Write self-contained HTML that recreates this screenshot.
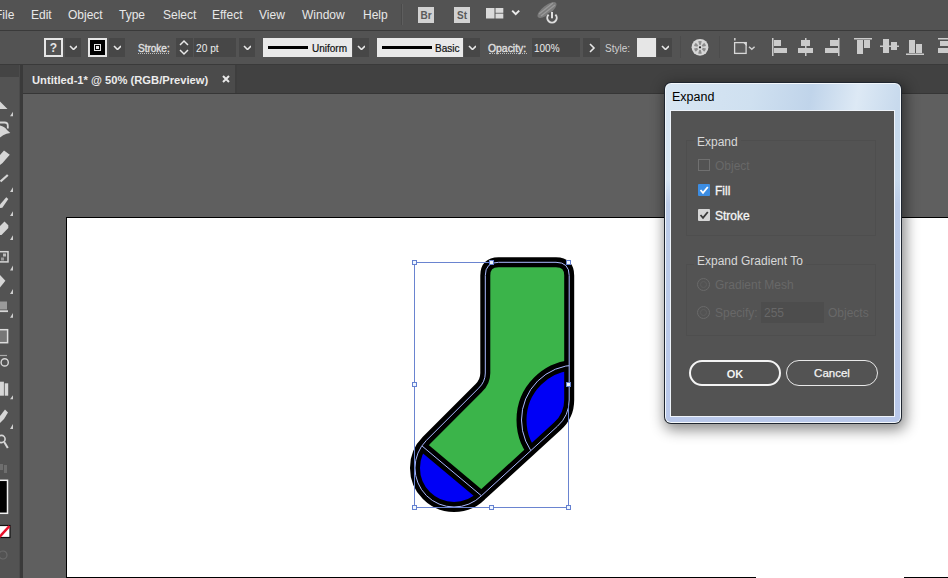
<!DOCTYPE html>
<html><head><meta charset="utf-8">
<style>
*{margin:0;padding:0;box-sizing:border-box}
html,body{width:948px;height:578px;overflow:hidden;background:#5f5f5f;font-family:"Liberation Sans",sans-serif}
.a{position:absolute}
#menubar{left:0;top:0;width:948px;height:30px;background:#535353}
#menuline{left:0;top:30px;width:948px;height:1px;background:#3a3a3a}
#ctrl{left:0;top:31px;width:948px;height:33px;background:#535353}
#ctrlline{left:0;top:64px;width:948px;height:1px;background:#3a3a3a}
#tabbar{left:0;top:65px;width:948px;height:28px;background:#414141}
#tab{left:23px;top:65px;width:212px;height:28px;background:#4b4b4b}
#tabedge{left:235px;top:65px;width:2px;height:28px;background:#3e3e3e}
#tabline{left:23px;top:93px;width:925px;height:1px;background:#363636}
#tools{left:0;top:65px;width:19px;height:513px;background:#535353}
#toolshead{left:0;top:65px;width:19px;height:12px;background:#444444}
#toolsgap{left:19px;top:65px;width:1px;height:513px;background:#4b4b4b}
#toolsline{left:20px;top:65px;width:3px;height:513px;background:#3a3a3a}
#canvas{left:23px;top:94px;width:925px;height:484px;background:#5f5f5f}
#artboard{left:66px;top:217px;width:882px;height:361px;background:#fff;border-left:1px solid #000;border-top:1px solid #000}
#abbottom{left:66px;top:577px;width:690px;height:1px;background:#000}
#abbottom2{left:904px;top:577px;width:44px;height:1px;background:#000}
.mi{position:absolute;top:8px;font-size:12px;color:#e8e8e8;white-space:nowrap;line-height:14px}
.lbl{position:absolute;font-size:11px;color:#e0e0e0;white-space:nowrap;line-height:13px}
.dd{position:absolute;top:38px;width:16px;height:19px;background:#474747}
.chev{position:absolute;width:8px;height:5px}
.sep{position:absolute;top:36px;width:1px;height:22px;background:#474747}
.tb{position:absolute;background:#d8d8d8}
.tind{position:absolute;width:0;height:0;border-left:4px solid transparent;border-bottom:4px solid #cfcfcf}
</style></head>
<body>
<div class="a" id="menubar"></div>
<div class="a" id="menuline"></div>
<div class="a" id="ctrl"></div>
<div class="a" id="ctrlline"></div>
<div class="a" id="tabbar"></div>
<div class="a" id="tab"></div>
<div class="a" id="tabedge"></div>
<div class="a" id="canvas"></div>
<div class="a" id="tabline"></div>
<div class="a" id="tools"></div>
<div class="a" id="toolshead"></div>
<div class="a" id="toolsgap"></div>
<div class="a" id="toolsline"></div>
<div class="a" id="artboard"></div>
<div class="a" id="abbottom"></div><div class="a" id="abbottom2"></div>

<!-- menu -->
<div class="mi" style="left:-5px">File</div>
<div class="mi" style="left:31px">Edit</div>
<div class="mi" style="left:68px">Object</div>
<div class="mi" style="left:119px">Type</div>
<div class="mi" style="left:163px">Select</div>
<div class="mi" style="left:212px">Effect</div>
<div class="mi" style="left:259px">View</div>
<div class="mi" style="left:302px">Window</div>
<div class="mi" style="left:363px">Help</div>
<div class="a" style="left:402px;top:4px;width:1px;height:21px;background:#5e5e5e"></div><div class="a" style="left:401px;top:4px;width:1px;height:21px;background:#4a4a4a"></div>
<div class="a" style="left:418px;top:7px;width:16px;height:16px;background:#d2d2d2;color:#5a5a5a;font-size:10px;font-weight:bold;text-align:center;line-height:18px">Br</div>
<div class="a" style="left:454px;top:7px;width:16px;height:16px;background:#d2d2d2;color:#5a5a5a;font-size:10px;font-weight:bold;text-align:center;line-height:18px">St</div>
<svg class="a" style="left:484px;top:6px" width="40" height="18" viewBox="0 0 40 18">
  <rect x="2" y="2" width="8.5" height="10.5" fill="#dadada"/>
  <rect x="11.5" y="2" width="7.8" height="4.8" fill="#dadada"/>
  <rect x="11.5" y="7.6" width="7.8" height="4.9" fill="#dadada"/>
  <path d="M28.2 4.6 L31.7 8.1 L35.2 4.6" stroke="#ececec" stroke-width="2" fill="none"/>
</svg>
<svg class="a" style="left:534px;top:0px" width="26" height="26" viewBox="534 0 26 26">
  <ellipse cx="547" cy="10" rx="11.5" ry="4.6" transform="rotate(-38 547 10)" fill="#7c7c7c"/>
  <path d="M539 14 L553 3 M541 16 L555 5" stroke="#9a9a9a" stroke-width="1.2"/>
  <circle cx="552" cy="18.3" r="6.3" fill="#535353"/>
  <path d="M548.6 14.6 A4.7 4.7 0 1 0 555.4 14.6" stroke="#dedede" stroke-width="2" fill="none"/>
  <rect x="551" y="12" width="2" height="6.3" fill="#dedede"/>
</svg>

<!-- control bar -->
<div class="a" style="left:44px;top:38px;width:19px;height:19px;border:2px solid #e6e6e6;color:#e6e6e6;font-size:12px;font-weight:bold;text-align:center;line-height:17px">?</div>
<div class="dd" style="left:65px"></div>
<svg class="chev a" style="left:69px;top:45px" width="9" height="6"><path d="M1 1 L4.5 4.5 L8 1" stroke="#e8e8e8" stroke-width="1.6" fill="none"/></svg>
<div class="a" style="left:88px;top:38px;width:19px;height:19px;background:#000;border:2px solid #e6e6e6"></div>
<div class="a" style="left:94px;top:44px;width:7px;height:7px;border:1.5px solid #e6e6e6;background:#000"></div>
<div class="a" style="left:96px;top:46px;width:3px;height:3px;background:#e6e6e6"></div>
<div class="dd" style="left:109px"></div>
<svg class="chev a" style="left:113px;top:45px" width="9" height="6"><path d="M1 1 L4.5 4.5 L8 1" stroke="#e8e8e8" stroke-width="1.6" fill="none"/></svg>
<div class="lbl" style="left:138px;top:43px;font-size:10px;-webkit-text-stroke:0.35px #e0e0e0;line-height:12px">Stroke:</div><div class="a" style="left:138px;top:53px;width:31px;height:1px;border-top:1px dotted #bdbdbd"></div>
<div class="a" style="left:176px;top:38px;width:17px;height:19px;background:#474747"></div>
<svg class="a" style="left:178px;top:39px" width="12" height="17"><path d="M2 6 L6 2 L10 6 M2 11 L6 15 L10 11" stroke="#e8e8e8" stroke-width="1.5" fill="none"/></svg>
<div class="a" style="left:194px;top:38px;width:42px;height:19px;background:#474747"></div>
<div class="lbl" style="left:196px;top:43px;font-size:10.2px;line-height:12px;color:#ececec">20 pt</div>
<div class="dd" style="left:239px"></div>
<svg class="chev a" style="left:243px;top:45px" width="9" height="6"><path d="M1 1 L4.5 4.5 L8 1" stroke="#e8e8e8" stroke-width="1.6" fill="none"/></svg>
<div class="a" style="left:263px;top:38px;width:89px;height:19px;background:#e9e9e9"></div>
<div class="a" style="left:268px;top:46px;width:40px;height:3.4px;background:#000"></div>
<div class="lbl" style="left:312px;top:43px;color:#111;font-size:10px;line-height:12px;-webkit-text-stroke:0.2px #111">Uniform</div>
<div class="dd" style="left:353px"></div>
<svg class="chev a" style="left:357px;top:45px" width="9" height="6"><path d="M1 1 L4.5 4.5 L8 1" stroke="#e8e8e8" stroke-width="1.6" fill="none"/></svg>
<div class="a" style="left:377px;top:38px;width:86px;height:19px;background:#e9e9e9"></div>
<div class="a" style="left:382px;top:46px;width:50px;height:3.4px;background:#000"></div>
<div class="lbl" style="left:435px;top:43px;color:#111;font-size:10px;line-height:12px;-webkit-text-stroke:0.2px #111">Basic</div>
<div class="dd" style="left:464px"></div>
<svg class="chev a" style="left:468px;top:45px" width="9" height="6"><path d="M1 1 L4.5 4.5 L8 1" stroke="#e8e8e8" stroke-width="1.6" fill="none"/></svg>
<div class="lbl" style="left:488px;top:43px;font-size:10.4px;-webkit-text-stroke:0.35px #e0e0e0;line-height:12px">Opacity:</div><div class="a" style="left:489px;top:53px;width:38px;height:1px;border-top:1px dotted #bdbdbd"></div>
<div class="a" style="left:532px;top:38px;width:48px;height:19px;background:#474747"></div>
<div class="lbl" style="left:534px;top:43px;font-size:10px;line-height:12px;color:#ececec">100%</div>
<div class="a" style="left:583px;top:38px;width:17px;height:19px;background:#474747"></div>
<svg class="a" style="left:588px;top:43px" width="8" height="10"><path d="M2 1 L6 5 L2 9" stroke="#e8e8e8" stroke-width="1.6" fill="none"/></svg>
<div class="lbl" style="left:605px;top:43px;font-size:10px;line-height:12px;color:#d0d0d0">Style:</div>
<div class="a" style="left:637px;top:38px;width:19px;height:19px;background:#e6e6e6"></div>
<div class="dd" style="left:657px;width:15px"></div>
<svg class="chev a" style="left:661px;top:45px" width="9" height="6"><path d="M1 1 L4.5 4.5 L8 1" stroke="#e8e8e8" stroke-width="1.6" fill="none"/></svg>
<div class="sep" style="left:680px;background:#4c4c4c"></div>
<svg class="a" style="left:690px;top:38px" width="20" height="19" viewBox="0 0 20 19">
  <circle cx="10" cy="9.3" r="8.4" fill="#d6d6d6"/>
  <g fill="#8c8c8c">
   <path d="M10 9.3 L8.2 3.2 A6.3 6.3 0 0 1 11.8 3.2 Z"/>
   <path d="M10 9.3 L14.2 4.8 A6.3 6.3 0 0 1 16 8 Z"/>
   <path d="M10 9.3 L16 10.6 A6.3 6.3 0 0 1 14.2 13.8 Z"/>
   <path d="M10 9.3 L11.8 15.4 A6.3 6.3 0 0 1 8.2 15.4 Z"/>
   <path d="M10 9.3 L5.8 13.8 A6.3 6.3 0 0 1 4 10.6 Z"/>
   <path d="M10 9.3 L4 8 A6.3 6.3 0 0 1 5.8 4.8 Z"/>
  </g>
  <circle cx="10" cy="9.3" r="2.6" fill="#d6d6d6"/>
  <circle cx="10" cy="9.3" r="1.1" fill="#222"/>
</svg>
<div class="sep" style="left:719px;background:#4c4c4c"></div>
<svg class="a" style="left:728px;top:36px" width="30" height="22" viewBox="0 0 30 22">
  <rect x="6.6" y="6.6" width="11.5" height="10.8" fill="#5c5c5c" stroke="#d8d8d8" stroke-width="1.3"/>
  <path d="M14.5 6 H18.7 V10.2 Z" fill="#d8d8d8"/>
  <rect x="6" y="2" width="1.6" height="2.5" fill="#c8c8c8"/>
  <path d="M21 10.8 L23.8 13.3 L26.6 10.8" stroke="#d0d0d0" stroke-width="1.5" fill="none"/>
</svg>
<!-- align icons -->
<svg class="a" style="left:770px;top:36px" width="178" height="22" viewBox="770 36 178 22">
  <g fill="#cbcbcb">
   <rect x="772" y="38" width="1.5" height="18"/><rect x="774" y="40" width="7" height="6"/><rect x="774" y="48" width="13" height="5"/>
   <rect x="805" y="38" width="1.5" height="18"/><rect x="801" y="40" width="9" height="6"/><rect x="798" y="48" width="15" height="5"/>
   <rect x="838" y="38" width="1.5" height="18"/><rect x="830" y="40" width="8" height="6"/><rect x="825" y="48" width="13" height="5"/>
   <rect x="854" y="38" width="18" height="1.5"/><rect x="857" y="40" width="6" height="14"/><rect x="864" y="40" width="6" height="8"/>
   <rect x="880" y="45.5" width="19" height="1.5"/><rect x="883" y="39" width="6" height="14"/><rect x="891" y="42" width="6" height="8"/>
   <rect x="906" y="53.5" width="18" height="1.5"/><rect x="909" y="40" width="6" height="13"/><rect x="916" y="44" width="6" height="9"/>
   <rect x="938" y="38" width="10" height="1.5"/><rect x="940" y="41" width="8" height="5"/><rect x="938" y="48" width="10" height="5"/>
  </g>
</svg>

<!-- tab -->
<div class="a" style="left:32px;top:73px;font-size:11.2px;font-weight:bold;color:#ececec;white-space:nowrap;line-height:14px">Untitled-1* @ 50% (RGB/Preview)</div>
<svg class="a" style="left:222px;top:75px" width="8" height="8"><path d="M1 1 L7 7 M7 1 L1 7" stroke="#e8e8e8" stroke-width="2"/></svg>

<!-- left tools -->
<svg class="a" style="left:0;top:94px" width="19" height="484" viewBox="0 94 19 484">
 <g fill="#d6d6d6">
  <path d="M0 101.5 L7.5 109 L0 109 Z"/>
  <path d="M0 122.5 H4.5 Q7.8 122.5 7.8 125.8 V128.5" fill="none" stroke="#d6d6d6" stroke-width="1.8"/>
  <path d="M0 125.5 Q5 126.5 7 130 L10.3 133 L6.5 133.8 Q3 135 0 137.5 Z"/>
  <path d="M0 155 L4 150.5 L9.8 154.8 L6 159 Q3 163 0 165 Z"/>
  <path d="M0.5 181.5 L7.8 175" fill="none" stroke="#d6d6d6" stroke-width="2.2"/>
  <path d="M0 204.5 L6.3 197.2 L8.3 199 L2.3 207.8 L0 208 Z"/>
  <path d="M0 226 L4.5 221.5 L8.3 225.3 L8.3 228 L1.5 235 L0 235 Z"/>
  <rect x="-1" y="251.7" width="9" height="10.2" fill="none" stroke="#d6d6d6" stroke-width="1.5"/>
  <rect x="3" y="253.5" width="3" height="3" fill="#bbb"/>
  <rect x="1" y="257.5" width="3" height="3" fill="#999"/>
  <path d="M0 275 L5.4 280.8 L0 287.5 Z"/>
  <rect x="0" y="301.5" width="7" height="8" fill="#9a9a9a"/>
  <rect x="0" y="310.3" width="8" height="1.8"/>
  <rect x="-1" y="329.7" width="8.6" height="13" fill="#777" stroke="#dcdcdc" stroke-width="1.5"/>
  <path d="M0 355.5 H7" stroke="#aaa" stroke-width="1.2"/>
  <circle cx="4.7" cy="362.4" r="3.6" fill="none" stroke="#d6d6d6" stroke-width="1.4"/>
  <rect x="0" y="381.7" width="3.9" height="14"/>
  <rect x="4.7" y="383.3" width="3.5" height="12.4"/>
  <path d="M0 416 L5 409.5 L8 412.5 L4 419 L0 423 Z"/>
  <circle cx="1.5" cy="439" r="3.6" fill="none" stroke="#d6d6d6" stroke-width="1.6"/>
  <path d="M4.2 442 L7.8 448" stroke="#d6d6d6" stroke-width="2"/>
 </g>
 <g fill="#d0d0d0">
  <path d="M10 116.3 L13 116.3 L13 111.8 Z"/>
  <path d="M10 192 L13 192 L13 187.3 Z"/>
  <path d="M10 216 L13 216 L13 211.3 Z"/>
  <path d="M10 240 L13 240 L13 235.3 Z"/>
  <path d="M10 270.5 L13 270.5 L13 265.5 Z"/>
  <path d="M10 294 L13 294 L13 289 Z"/>
  <path d="M10 317.8 L13 317.8 L13 313 Z"/>
  <path d="M10 399.2 L13 399.2 L13 395.3 Z"/>
  <path d="M10 429 L13 429 L13 424 Z"/>
 </g>
 <g fill="#6e6e6e"><rect x="0" y="464" width="3" height="6"/><rect x="4" y="465" width="3" height="8"/></g>
 <rect x="-1" y="480.3" width="8.5" height="33" fill="#000" stroke="#f0f0f0" stroke-width="1.5"/>
 <rect x="-1" y="525.5" width="11" height="12" fill="#fff" stroke="#111" stroke-width="1.2"/>
 <path d="M-0.5 537 L9.5 526" stroke="#e8102a" stroke-width="2.6"/>
 <circle cx="3" cy="555" r="4" fill="none" stroke="#6a6a6a" stroke-width="1.2"/>
</svg>

<!-- sock -->
<svg class="a" style="left:0;top:0" width="948" height="578" viewBox="0 0 948 578">
 <defs>
  <path id="sockpath" d="M485.3 275.5 Q485.3 262.3 498.5 262.3 L556 262.3 Q569.2 262.3 569.2 275.5 L569.2 400 Q569.2 415.7 557.4 426.3 L481.6 495.6 A39 39 0 0 1 426.4 440.4 L478.6 388.2 Q485.3 381.85 485.3 373 Z"/>
  <clipPath id="sockclip"><use href="#sockpath"/></clipPath>
 </defs>
 <g clip-path="url(#sockclip)">
  <rect x="400" y="250" width="180" height="270" fill="#3bb44a"/>
  <circle cx="576.5" cy="420" r="55" fill="#0000f6"/>
  <path d="M400.3 427.8 L505.8 516.2 L420 580 L340 480 Z" fill="#0000f6"/>
  <circle cx="576.5" cy="420" r="55" stroke="#000" stroke-width="10" fill="none"/>
  <path d="M400.3 427.8 L505.8 516.2" stroke="#000" stroke-width="10" fill="none"/>
 </g>
 <use href="#sockpath" stroke="#000" stroke-width="10" fill="none"/>
 <g stroke="#a9b8ff" stroke-width="1" fill="none">
  <use href="#sockpath"/>
  <g clip-path="url(#sockclip)">
   <circle cx="576.5" cy="420" r="55"/>
   <path d="M400.3 427.8 L505.8 516.2"/>
  </g>
 </g>
 <path d="M491 262.5 H414.5 V507.5 H568.5 V405" stroke="#6a84d0" stroke-width="1" fill="none"/>
 <g fill="#eef6ff" stroke="#6480d0" stroke-width="1">
  <rect x="412.5" y="260.5" width="4" height="4"/>
  <rect x="489.5" y="260.5" width="4" height="4"/>
  <rect x="566.5" y="260.5" width="4" height="4"/>
  <rect x="412.5" y="382.5" width="4" height="4"/>
  <rect x="566.5" y="382.5" width="4" height="4"/>
  <rect x="412.5" y="505.5" width="4" height="4"/>
  <rect x="489.5" y="505.5" width="4" height="4"/>
  <rect x="566.5" y="505.5" width="4" height="4"/>
 </g>
</svg>

<!-- dialog -->
<div class="a" style="left:664px;top:82px;width:238px;height:342px;border-radius:7px;background:#1f2630;box-shadow:2px 4px 14px 2px rgba(0,0,0,.45)"></div>
<div class="a" style="left:665px;top:83px;width:236px;height:340px;border-radius:6px;background:linear-gradient(100deg,#d8e6f3 0%,#cfe0f0 30%,#c0d4ea 50%,#dde9f5 66%,#c8daed 80%,#c6d9ec 100%);border:1px solid rgba(255,255,255,.75)"></div><div class="a" style="left:666px;top:180px;width:234px;height:242px;border-radius:0 0 5px 5px;background:linear-gradient(180deg,rgba(188,204,232,0) 0%,#bccce8 10%,#b9c8ea 100%)"></div>
<div class="a" style="left:672px;top:90px;font-size:12.5px;color:#000;line-height:14px">Expand</div>
<div class="a" style="left:670px;top:110px;width:225px;height:307px;background:#535353;border:1px solid #eef3fa"></div>
<div class="a" style="left:686px;top:140px;width:190px;height:96px;border:1px solid #4e4e4e"></div>
<div class="a" style="left:694px;top:135px;background:#535353;padding:0 3px;font-size:12px;color:#d8d8d8;line-height:14px">Expand</div>
<div class="a" style="left:698px;top:159px;width:12px;height:12px;border:1px solid #707070"></div>
<div class="a" style="left:715px;top:159px;font-size:12px;color:#686868;line-height:14px">Object</div>
<div class="a" style="left:698px;top:184px;width:12px;height:12px;background:#3c8de3;border-radius:1px"></div>
<svg class="a" style="left:698px;top:184px" width="12" height="12"><path d="M2.5 6 L5 8.8 L9.8 3" stroke="#fff" stroke-width="1.8" fill="none"/></svg>
<div class="a" style="left:715px;top:184px;font-size:12px;color:#f6f6f6;-webkit-text-stroke:0.3px #f6f6f6;line-height:14px">Fill</div>
<div class="a" style="left:698px;top:209px;width:12px;height:12px;background:#d6d6d6;border-radius:1px"></div>
<svg class="a" style="left:698px;top:209px" width="12" height="12"><path d="M2.5 6 L5 8.8 L9.8 3" stroke="#3a3a3a" stroke-width="1.8" fill="none"/></svg>
<div class="a" style="left:715px;top:209px;font-size:12px;color:#f6f6f6;-webkit-text-stroke:0.3px #f6f6f6;line-height:14px">Stroke</div>

<div class="a" style="left:686px;top:264px;width:190px;height:72px;border:1px solid #4e4e4e"></div>
<div class="a" style="left:694px;top:254px;background:#535353;padding:0 3px;font-size:12px;color:#d8d8d8;line-height:14px">Expand Gradient To</div>
<div class="a" style="left:697px;top:278px;width:13px;height:13px;border:1px solid #6a6a6a;border-radius:50%"></div><div class="a" style="left:700px;top:281px;width:7px;height:7px;border:1px solid #5e5e5e;border-radius:50%"></div>
<div class="a" style="left:715px;top:278px;font-size:12px;color:#686868;line-height:14px">Gradient Mesh</div>
<div class="a" style="left:697px;top:306px;width:13px;height:13px;border:1px solid #6a6a6a;border-radius:50%"></div><div class="a" style="left:700px;top:309px;width:7px;height:7px;border:1px solid #5e5e5e;border-radius:50%"></div>
<div class="a" style="left:715px;top:306px;font-size:12px;color:#686868;line-height:14px">Specify:</div>
<div class="a" style="left:761px;top:302px;width:63px;height:21px;background:#4d4d4d"></div>
<div class="a" style="left:764px;top:306px;font-size:12px;color:#686868;line-height:14px">255</div>
<div class="a" style="left:828px;top:306px;font-size:12px;color:#686868;line-height:14px">Objects</div>

<div class="a" style="left:689px;top:360px;width:92px;height:26px;border:2px solid #f4f4f4;border-radius:13px;color:#f2f2f2;font-size:11px;font-weight:bold;text-align:center;line-height:24px">OK</div>
<div class="a" style="left:786px;top:360px;width:92px;height:26px;border:1.5px solid #e8e8e8;border-radius:13px;color:#f4f4f4;font-size:11.5px;-webkit-text-stroke:0.25px #f4f4f4;text-align:center;line-height:24px">Cancel</div>

</body></html>
